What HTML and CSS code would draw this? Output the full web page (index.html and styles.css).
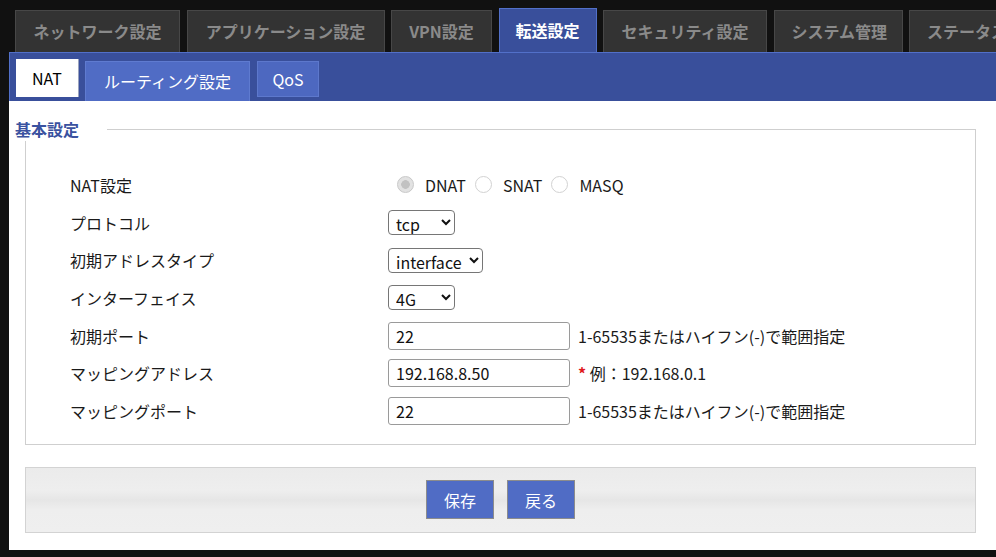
FILE: index.html
```html
<!DOCTYPE html>
<html lang="ja">
<head>
<meta charset="utf-8">
<title>転送設定 - NAT</title>
<link rel="stylesheet" href="styles.css">
</head>
<body>
<div class="page">
  <nav class="main-tabs">
    <a class="tab tab-network">ネットワーク設定</a>
    <a class="tab tab-app">アプリケーション設定</a>
    <a class="tab tab-vpn">VPN設定</a>
    <a class="tab tab-active">転送設定</a>
    <a class="tab tab-sec">セキュリティ設定</a>
    <a class="tab tab-sys">システム管理</a>
    <a class="tab">ステータス</a>
  </nav>
  <div class="panel">
    <div class="sub-tabs">
      <a class="sub-tab sub-current">NAT</a>
      <a class="sub-tab sub-hover">ルーティング設定</a>
      <a class="sub-tab sub-plain">QoS</a>
    </div>
    <fieldset class="basic">
      <legend>基本設定</legend>
      <div class="row">
        <span class="label">NAT設定</span>
        <div class="ctrl radios">
          <input type="radio" name="nat" class="radio" checked><span class="opt">DNAT</span>
          <input type="radio" name="nat" class="radio"><span class="opt">SNAT</span>
          <input type="radio" name="nat" class="radio"><span class="opt">MASQ</span>
        </div>
      </div>
      <div class="row">
        <span class="label">プロトコル</span>
        <div class="ctrl"><select class="sel sel-s"><option>tcp</option></select></div>
      </div>
      <div class="row">
        <span class="label">初期アドレスタイプ</span>
        <div class="ctrl"><select class="sel sel-m"><option>interface</option></select></div>
      </div>
      <div class="row">
        <span class="label">インターフェイス</span>
        <div class="ctrl"><select class="sel sel-s"><option>4G</option></select></div>
      </div>
      <div class="row">
        <span class="label">初期ポート</span>
        <div class="ctrl"><input class="txt" type="text" value="22"><span class="hint">1-65535またはハイフン(-)で範囲指定</span></div>
      </div>
      <div class="row">
        <span class="label">マッピングアドレス</span>
        <div class="ctrl"><input class="txt" type="text" value="192.168.8.50"><span class="hint"><span class="req">*</span> 例：192.168.0.1</span></div>
      </div>
      <div class="row">
        <span class="label">マッピングポート</span>
        <div class="ctrl"><input class="txt" type="text" value="22"><span class="hint">1-65535またはハイフン(-)で範囲指定</span></div>
      </div>
    </fieldset>
    <div class="actions">
      <button class="btn">保存</button>
      <button class="btn">戻る</button>
    </div>
  </div>
</div>
</body>
</html>
```

FILE: styles.css
```css
html, body {
  margin: 0;
  padding: 0;
  background: #111111;
  height: 557px;
  overflow: hidden;
  font-family: "Noto Sans CJK JP", "Noto Sans", sans-serif;
}

.page {
  margin-left: 9px;
  width: 987px;
}

.main-tabs {
  display: flex;
  align-items: flex-end;
  gap: 6.5px;
  padding: 10px 0 0 6px;
  height: 42px;
  white-space: nowrap;
  overflow: hidden;
}

.tab {
  flex: none;
  display: block;
  box-sizing: border-box;
  height: 42px;
  line-height: 40px;
  padding: 0 17px;
  text-align: center;
  background: #333333;
  border: 1px solid #474747;
  border-bottom: none;
  color: #8a8a8a;
  font-size: 16px;
  font-weight: bold;
}

.tab-network { width: 165px; }
.tab-app { width: 198px; }
.tab-vpn { width: 101px; }
.tab-sec { width: 164px; }
.tab-sys { width: 129px; }

.tab-active {
  position: relative;
  z-index: 2;
  width: 98px;
  height: 45px;
  line-height: 43px;
  margin-bottom: -1px;
  padding: 0;
  background: #394f9b;
  border-color: #5270c9;
  color: #ffffff;
}

.panel {
  background: #ffffff;
  height: 498px;
}

.sub-tabs {
  display: flex;
  align-items: flex-start;
  gap: 7px;
  height: 48px;
  padding-left: 6px;
  background: #394f9b;
  border-top: 1px solid #5270c9;
  border-left: 1px solid #5270c9;
}

.sub-tab {
  display: block;
  font-size: 16px;
  color: #ffffff;
  padding: 0 17px;
  box-sizing: border-box;
}

.sub-current {
  margin-top: 6px;
  height: 38px;
  line-height: 38px;
  padding: 0 16px;
  background: #ffffff;
  color: #000000;
  box-shadow: 1px 0 0 #9aa3bf;
}

.sub-hover {
  margin-top: 8px;
  height: 40px;
  line-height: 38px;
  padding: 0 18px;
  background: #506cc5;
  border: 1px solid #5f7bd0;
  border-bottom: none;
}

.sub-plain {
  margin-top: 8px;
  height: 36px;
  line-height: 34px;
  width: 62px;
  padding: 0;
  text-align: center;
  background: #4d68c0;
  border: 1px solid #5d78cc;
}

.basic {
  margin: 16px 20px 0 16px;
  padding: 25px 0 14px 44px;
  border: 1px solid #cfcfcf;
  min-width: 0;
}

.basic legend {
  margin-left: -55px;
  padding: 0 28px 0 0;
  line-height: 24px;
  background: #ffffff;
  color: #3a52a0;
  font-size: 16px;
  font-weight: bold;
}

.row {
  display: flex;
  align-items: center;
  height: 37.7px;
}

.label {
  width: 318px;
  flex: none;
  font-size: 16px;
  color: #1a1a1a;
}

.ctrl {
  display: flex;
  align-items: center;
  font-size: 16px;
  color: #1a1a1a;
}

.radios {
  padding-left: 9px;
}

.radio {
  appearance: none;
  -webkit-appearance: none;
  width: 17px;
  height: 17px;
  margin: 0 11px 0 0;
  border: 1px solid #d2d2d2;
  border-radius: 50%;
  background: #ffffff;
  box-sizing: border-box;
}

.radio:checked {
  background: radial-gradient(circle, #c2c2c2 0 4px, #e2e2e2 4.6px);
  border-color: #c8c8c8;
}

.opt {
  margin-right: 9px;
}

.sel {
  height: 25px;
  padding: 0 3px;
  font-family: "Noto Sans CJK JP", "Noto Sans", sans-serif;
  font-size: 16px;
  color: #111111;
  background: #ffffff;
  border: 1px solid #767676;
  border-radius: 4px;
}

.sel-s { width: 67px; }
.sel-m { width: 95px; }

.txt {
  width: 182px;
  height: 28px;
  box-sizing: border-box;
  padding: 0 7px;
  margin: 0 8px 0 0;
  font-family: "Noto Sans CJK JP", "Noto Sans", sans-serif;
  font-size: 16px;
  color: #111111;
  border: 1px solid #9a9a9a;
  border-radius: 3px;
}

.hint {
  font-size: 16px;
  color: #1a1a1a;
}

.req {
  color: #e0191e;
  font-weight: bold;
}

.actions {
  margin: 22px 20px 0 16px;
  height: 64px;
  border: 1px solid #d3d3d3;
  background: linear-gradient(#ebebeb 0%, #eeeeee 35%, #e6e6e6 50%, #eeeeee 65%, #efefef 100%);
  display: flex;
  justify-content: center;
  align-items: center;
  gap: 13px;
}

.btn {
  width: 68px;
  height: 39px;
  padding: 0;
  background: #506cc5;
  border: 1px solid #8c8c8c;
  color: #ffffff;
  font-family: "Noto Sans CJK JP", sans-serif;
  font-size: 16px;
}
```
